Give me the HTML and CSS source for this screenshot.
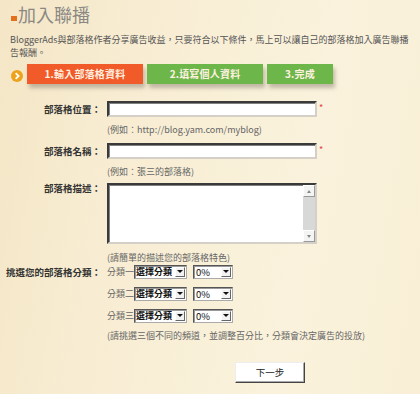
FILE: index.html
```html
<!DOCTYPE html>
<html lang="zh-Hant">
<head>
<meta charset="utf-8">
<title>加入聯播</title>
<link rel="stylesheet" href="styles.css">
</head>
<body>
<div class="page">
  <h1 class="title"><span class="bullet"></span>加入聯播</h1>
  <p class="intro">BloggerAds與部落格作者分享廣告收益，只要符合以下條件，馬上可以讓自己的部落格加入廣告聯播<br>告報酬。</p>

  <div class="steps">
    <span class="go"><svg width="12" height="12" viewBox="0 0 12 12"><circle cx="6" cy="6" r="6" fill="#eea21c"/><path d="M4.6 3.2 L7.6 6 L4.6 8.8" fill="none" stroke="#fff" stroke-width="1.8"/></svg></span>
    <span class="step step-active">1.輸入部落格資料</span>
    <span class="step step-next">2.填寫個人資料</span>
    <span class="step step-next step-last">3.完成</span>
  </div>

  <div class="form">
    <div class="row">
      <span class="label">部落格位置：</span>
      <span class="field"></span>
      <span class="req">*</span>
    </div>
    <div class="hint hint-1">(例如：http://blog.yam.com/myblog)</div>

    <div class="row">
      <span class="label">部落格名稱：</span>
      <span class="field"></span>
      <span class="req">*</span>
    </div>
    <div class="hint hint-2">(例如：張三的部落格)</div>

    <div class="row row-top">
      <span class="label">部落格描述：</span>
      <div class="area">
        <div class="area-body"></div>
        <div class="scroll">
          <span class="sbtn sbtn-up"></span>
          <span class="strack"></span>
          <span class="sbtn sbtn-down"></span>
        </div>
      </div>
    </div>
    <div class="hint hint-3">(請簡單的描述您的部落格特色)</div>

    <div class="row cat-row">
      <span class="label">挑選您的部落格分類：</span>
      <span class="cat-name">分類一</span>
      <span class="sel sel-cat"><span class="val">選擇分類</span><span class="arr"></span></span>
      <span class="sel sel-pct"><span class="val">0%</span><span class="arr"></span></span>
    </div>
    <div class="row cat-row">
      <span class="label"></span>
      <span class="cat-name">分類二</span>
      <span class="sel sel-cat"><span class="val">選擇分類</span><span class="arr"></span></span>
      <span class="sel sel-pct"><span class="val">0%</span><span class="arr"></span></span>
    </div>
    <div class="row cat-row">
      <span class="label"></span>
      <span class="cat-name">分類三</span>
      <span class="sel sel-cat"><span class="val">選擇分類</span><span class="arr"></span></span>
      <span class="sel sel-pct"><span class="val">0%</span><span class="arr"></span></span>
    </div>
    <div class="hint hint-4">(請挑選三個不同的頻道，並調整百分比，分類會決定廣告的投放)</div>

    <div class="actions">
      <button class="next" type="button">下一步</button>
    </div>
  </div>
</div>
</body>
</html>
```

FILE: styles.css
```css
html, body {
  margin: 0;
  padding: 0;
}
body {
  width: 420px;
  height: 394px;
  overflow: hidden;
  background: linear-gradient(100deg, #f4e6c6 0%, #f8edd3 30%, #faf2dc 70%, #f9efd6 100%);
  font-family: "Noto Sans CJK TC", "DejaVu Sans", sans-serif;
  color: #444;
}
.title {
  margin: 0;
  padding: 1px 0 0 11px;
  height: 24px;
  display: flex;
  align-items: flex-end;
  font-size: 18px;
  line-height: 22px;
  font-weight: normal;
  color: #8b8884;
}
.bullet {
  display: inline-block;
  width: 6px;
  height: 5px;
  background: #e3701d;
  margin: 0 1px 4px 0;
}
.intro {
  margin: 8px 0 0 10px;
  font-size: 9px;
  line-height: 13px;
  color: #555;
  white-space: nowrap;
}
.steps {
  margin-top: 5px;
  display: flex;
  align-items: flex-start;
  height: 20px;
  padding-left: 11px;
}
.go {
  width: 12px;
  height: 12px;
  margin-top: 6px;
  margin-right: 4px;
  display: flex;
}
.step {
  height: 20px;
  line-height: 20px;
  font-size: 10px;
  font-weight: bold;
  color: #fff1e0;
  text-align: center;
  box-shadow: 2px 4px 4px rgba(90, 80, 70, 0.35);
  letter-spacing: 0.2px;
}
.step-active {
  width: 116px;
  background: #f15a29;
}
.step-next {
  width: 116px;
  margin-left: 4px;
  background: #6db649;
}
.step-last {
  width: 66px;
}
.form {
  margin-top: 16px;
}
.row {
  display: flex;
  align-items: center;
  height: 17px;
}
.row-top {
  align-items: flex-start;
  height: auto;
}
.label {
  width: 101px;
  flex: none;
  text-align: right;
  font-size: 9.5px;
  font-weight: bold;
  color: #333;
  margin-right: 6px;
  white-space: nowrap;
}
.row-top .label {
  line-height: 11px;
}
.field {
  display: block;
  width: 206px;
  height: 12px;
  background: #fff;
  border: 2px solid;
  border-color: #3a3a3a #d4d0c8 #d4d0c8 #3a3a3a;
  box-shadow: inset 1px 1px 0 #808080;
}
.req {
  color: #e04040;
  font-size: 9px;
  margin-left: 2px;
  margin-top: -3px;
}
.hint {
  margin-left: 107px;
  font-size: 9px;
  line-height: 11px;
  color: #666;
  white-space: nowrap;
}
.hint-1 { margin-top: 7px; margin-bottom: 7px; }
.hint-2 { margin-top: 7px; margin-bottom: 6px; }
.hint-3 { margin-top: 8px; margin-bottom: 1px; }
.hint-4 { margin-top: 5px; }
.area {
  width: 206px;
  height: 57px;
  display: flex;
  background: #fff;
  border: 2px solid;
  border-color: #3a3a3a #d4d0c8 #d4d0c8 #3a3a3a;
  box-shadow: inset 1px 1px 0 #808080;
}
.area-body {
  flex: 1;
}
.scroll {
  width: 12px;
  display: flex;
  flex-direction: column;
  background: #e8e8e8;
}
.sbtn {
  height: 12px;
  display: flex;
  align-items: center;
  justify-content: center;
  background: #f4f4f4;
  border: 1px solid;
  border-color: #fff #999 #999 #fff;
  box-sizing: border-box;
}
.sbtn::after {
  content: "";
  border-left: 2.5px solid transparent;
  border-right: 2.5px solid transparent;
}
.sbtn-up::after {
  border-bottom: 3px solid #888;
}
.sbtn-down::after {
  border-top: 3px solid #888;
}
.strack {
  flex: 1;
  background: #d8d8d8;
}
.cat-row {
  height: 15px;
  margin-bottom: 7px;
}
.cat-name {
  font-size: 9px;
  color: #666;
  width: 27px;
  flex: none;
  white-space: nowrap;
}
.sel {
  display: flex;
  align-items: center;
  height: 14px;
  box-sizing: border-box;
  background: #fff;
  border: 1px solid;
  border-color: #555 #aaa #aaa #555;
  box-shadow: inset 1px 1px 0 #999;
}
.sel-cat {
  width: 53px;
  margin-right: 6px;
}
.sel-pct {
  width: 40px;
}
.val {
  flex: 1;
  font-size: 9.5px;
  line-height: 12px;
  padding-left: 2px;
  color: #111;
  white-space: nowrap;
}
.sel-cat .val {
  font-size: 9px;
  font-weight: bold;
  padding-left: 1px;
}
.arr {
  width: 10px;
  height: 10px;
  flex: none;
  margin-right: 1px;
  display: flex;
  align-items: center;
  justify-content: center;
  background: #f2f2f2;
  border: 1px solid;
  border-color: #fff #666 #666 #fff;
  box-sizing: border-box;
}
.arr::after {
  content: "";
  border-left: 3px solid transparent;
  border-right: 3px solid transparent;
  border-top: 3px solid #111;
}
.actions {
  margin-top: 16px;
  padding-left: 235px;
}
.next {
  width: 70px;
  height: 21px;
  padding: 0;
  font-family: "Noto Sans CJK TC", sans-serif;
  font-size: 9.5px;
  color: #222;
  background: #fff;
  border: 1px solid;
  border-color: #eee #444 #444 #eee;
  box-shadow: inset -1px -1px 0 #aaa;
}
```
